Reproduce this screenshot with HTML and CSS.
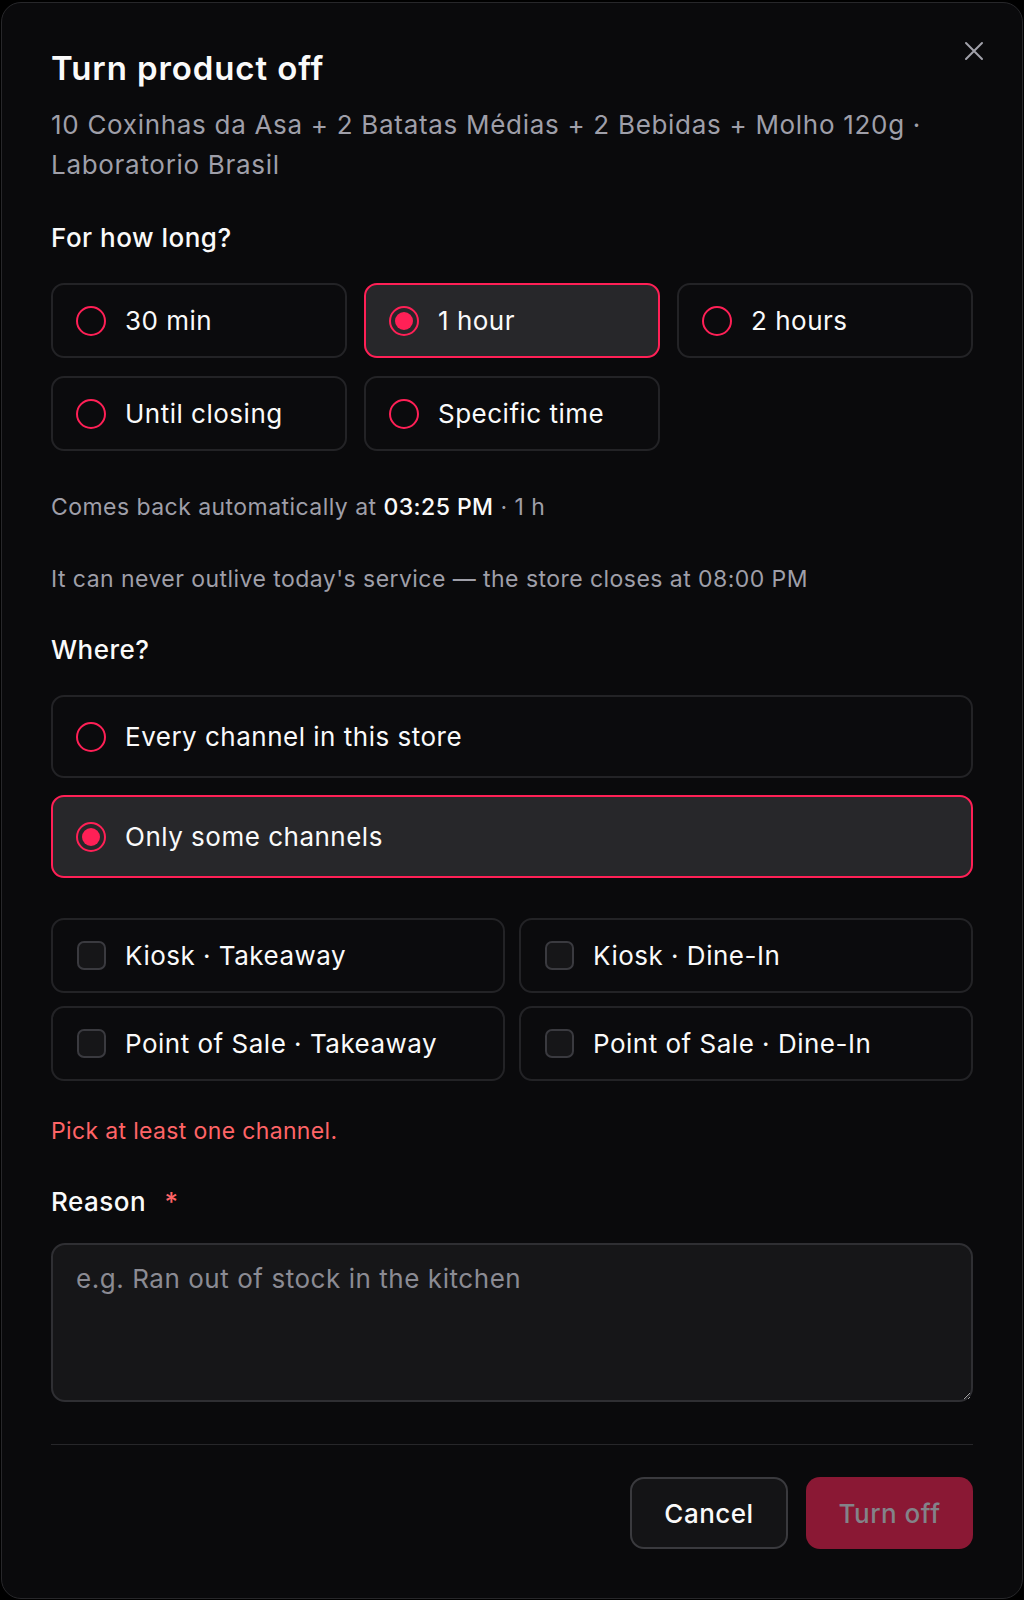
FILE: index.html
```html
<!DOCTYPE html>
<html lang="en">
<head>
<meta charset="utf-8">
<title>Turn product off</title>
<link rel="stylesheet" href="styles.css">
</head>
<body>
<div class="page">
  <div class="modal">
    <button class="close" type="button" aria-label="Close">
      <svg width="20" height="20" viewBox="0 0 20 20" fill="none" stroke="currentColor" stroke-width="2" stroke-linecap="round"><path d="M2 2L18 18M18 2L2 18"/></svg>
    </button>
    <h1 class="title">Turn product off</h1>
    <p class="subtitle">10 Coxinhas da Asa + 2 Batatas Médias + 2 Bebidas + Molho 120g · Laboratorio Brasil</p>

    <h2 class="label label-duration">For how long?</h2>
    <div class="duration-grid">
      <div class="option"><span class="radio"></span><span>30 min</span></div>
      <div class="option is-selected"><span class="radio"></span><span>1 hour</span></div>
      <div class="option"><span class="radio"></span><span>2 hours</span></div>
      <div class="option"><span class="radio"></span><span>Until closing</span></div>
      <div class="option"><span class="radio"></span><span>Specific time</span></div>
    </div>

    <p class="hint hint-return">Comes back automatically at <strong>03:25 PM</strong> · 1 h</p>
    <p class="hint hint-limit">It can never outlive today's service — the store closes at 08:00 PM</p>

    <h2 class="label label-where">Where?</h2>
    <div class="where-list">
      <div class="option option-wide"><span class="radio"></span><span>Every channel in this store</span></div>
      <div class="option option-wide is-selected"><span class="radio"></span><span>Only some channels</span></div>
    </div>

    <div class="channel-grid">
      <div class="option option-check"><span class="checkbox"></span><span>Kiosk · Takeaway</span></div>
      <div class="option option-check"><span class="checkbox"></span><span>Kiosk · Dine-In</span></div>
      <div class="option option-check"><span class="checkbox"></span><span>Point of Sale · Takeaway</span></div>
      <div class="option option-check"><span class="checkbox"></span><span>Point of Sale · Dine-In</span></div>
    </div>

    <p class="error">Pick at least one channel.</p>

    <h2 class="label label-reason">Reason <span class="req">*</span></h2>
    <textarea class="reason" placeholder="e.g. Ran out of stock in the kitchen"></textarea>

    <div class="footer">
      <button class="btn btn-cancel" type="button">Cancel</button>
      <button class="btn btn-primary" type="button" disabled>Turn off</button>
    </div>
  </div>
</div>
</body>
</html>
```

FILE: styles.css
```css
* { box-sizing: border-box; }

html, body {
  margin: 0;
  padding: 0;
  background: #000;
}

body {
  font-family: Inter, "Noto Sans", "Liberation Sans", sans-serif;
  color: #fafafa;
  color-scheme: dark;
}

.page {
  padding: 2px 1px 1px 1px;
}

.modal {
  position: relative;
  width: 1022px;
  height: 1597px;
  background: #0a0a0c;
  border: 1px solid #27272a;
  border-radius: 20px;
  padding: 47px 49px 48px;
  display: flex;
  flex-direction: column;
}

.close {
  position: absolute;
  top: 38px;
  right: 38px;
  width: 20px;
  height: 20px;
  padding: 0;
  border: 0;
  background: none;
  color: #a1a1aa;
  display: flex;
}

.title {
  margin: 0;
  font-size: 33px;
  line-height: 36px;
  font-weight: 600;
  letter-spacing: 0.9px;
  color: #fafafa;
}

.subtitle {
  margin: 19px 0 0;
  font-size: 26px;
  line-height: 40px;
  letter-spacing: 0.7px;
  color: #9f9fa9;
}

.label {
  margin: 0;
  font-size: 26px;
  line-height: 32px;
  font-weight: 500;
  letter-spacing: 0.5px;
  color: #fafafa;
}

.label-duration { margin-top: 37px; }
.label-where { margin-top: 40px; }
.label-reason { margin-top: 40px; }

.req {
  color: #ff6467;
  margin-left: 11px;
}

.duration-grid {
  margin-top: 29px;
  display: grid;
  grid-template-columns: repeat(3, 1fr);
  grid-auto-rows: 75px;
  column-gap: 17px;
  row-gap: 18px;
}

.option {
  display: flex;
  align-items: center;
  gap: 19px;
  padding: 0 23px;
  border: 2px solid #232326;
  border-radius: 13px;
  background: #0b0b0d;
  font-size: 26px;
  line-height: 32px;
  letter-spacing: 0.5px;
  color: #fafafa;
}

.option.is-selected {
  background: #27272a;
  border-color: #ff2056;
}

.radio {
  flex: none;
  width: 30px;
  height: 30px;
  border: 2px solid #ff2056;
  border-radius: 50%;
  display: flex;
  align-items: center;
  justify-content: center;
}

.is-selected .radio::after {
  content: "";
  width: 18px;
  height: 18px;
  border-radius: 50%;
  background: #ff2056;
}

.hint {
  margin: 0;
  font-size: 23px;
  line-height: 30px;
  letter-spacing: 0.45px;
  color: #9f9fa9;
}

.hint strong {
  font-weight: 500;
  color: #fafafa;
}

.hint-return { margin-top: 41px; }
.hint-limit { margin-top: 42px; }

.where-list {
  margin-top: 29px;
  display: flex;
  flex-direction: column;
  gap: 17px;
}

.option-wide {
  height: 83px;
}

.channel-grid {
  margin-top: 40px;
  display: grid;
  grid-template-columns: repeat(2, 1fr);
  grid-auto-rows: 75px;
  column-gap: 14px;
  row-gap: 13px;
}

.option-check {
  padding-left: 24px;
}

.checkbox {
  flex: none;
  width: 29px;
  height: 29px;
  border: 2px solid #3a3a3f;
  border-radius: 7px;
  background: #161618;
}

.error {
  margin: 35px 0 0;
  font-size: 23px;
  line-height: 30px;
  letter-spacing: 0.35px;
  color: #ff6467;
}

.reason {
  display: block;
  margin-top: 25px;
  width: 100%;
  height: 159px;
  padding: 18px 23px;
  border: 2px solid #2f2f33;
  border-radius: 14px;
  background: #161618;
  color: #fafafa;
  font-family: inherit;
  font-size: 26px;
  line-height: 32px;
  letter-spacing: 0.55px;
  resize: vertical;
  outline: none;
}

.reason::placeholder {
  color: #8b8b93;
}

.footer {
  margin-top: 42px;
  border-top: 1px solid #27272a;
  padding-top: 32px;
  display: flex;
  justify-content: flex-end;
  gap: 18px;
}

.btn {
  height: 72px;
  padding: 0;
  border-radius: 14px;
  font-family: inherit;
  font-size: 26px;
  font-weight: 500;
  letter-spacing: 0.5px;
}

.btn-cancel {
  width: 158px;
  background: #141416;
  border: 2px solid #3a3a3e;
  color: #fafafa;
}

.btn-primary {
  width: 167px;
  background: #8a1834;
  border: 0;
  color: #838389;
}
```
